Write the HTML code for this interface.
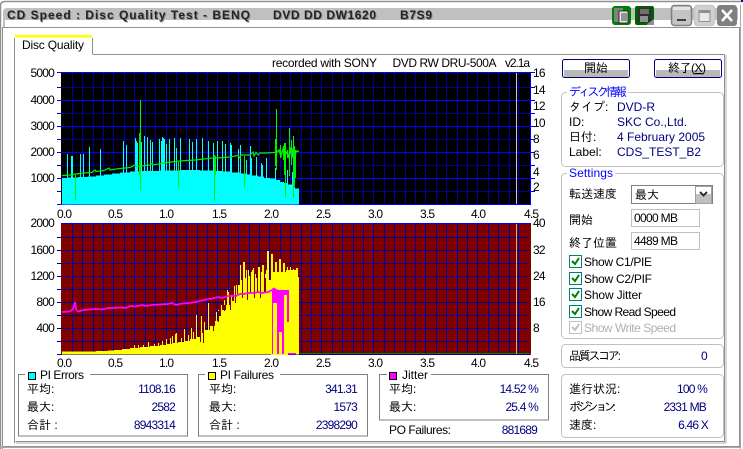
<!DOCTYPE html>
<html><head><meta charset="utf-8"><title>CD Speed</title>
<style>
html,body{margin:0;padding:0;background:#fff;overflow:hidden}
svg{display:block}
text{font-family:"Liberation Sans","IPAGothic","Noto Sans CJK JP",sans-serif;font-size:12px;fill:#000}
.n{letter-spacing:-.8px}
.r{text-anchor:end}
.v{fill:#000080}
.b{fill:#0000ff}
.g{fill:#b0b0b0}
.t{font-family:"Liberation Sans",sans-serif;font-size:12px;font-weight:bold;fill:#222}
.ts{font-family:"Liberation Sans",sans-serif;font-size:12px;font-weight:bold;fill:#909090}
.c{shape-rendering:crispEdges}
</style></head><body>
<svg width="743" height="449" viewBox="0 0 743 449" xmlns="http://www.w3.org/2000/svg">
<defs>
<path id="vl" d="M72.5 0V449M82.5 0V449M93.5 0V449M103.5 0V449M113.5 0V449M124.5 0V449M134.5 0V449M145.5 0V449M155.5 0V449M166.5 0V449M176.5 0V449M186.5 0V449M197.5 0V449M207.5 0V449M217.5 0V449M228.5 0V449M238.5 0V449M249.5 0V449M259.5 0V449M269.5 0V449M280.5 0V449M290.5 0V449M301.5 0V449M311.5 0V449M321.5 0V449M332.5 0V449M342.5 0V449M353.5 0V449M363.5 0V449M373.5 0V449M384.5 0V449M394.5 0V449M405.5 0V449M415.5 0V449M425.5 0V449M436.5 0V449M446.5 0V449M457.5 0V449M467.5 0V449M477.5 0V449M488.5 0V449M498.5 0V449M509.5 0V449M518.5 0V449"/>
<clipPath id="c1"><rect x="61" y="73" width="470" height="132"/></clipPath>
<clipPath id="c2"><rect x="61" y="224" width="470" height="131"/></clipPath>
</defs>

<!-- window frame -->
<rect width="743" height="449" fill="#fff"/>
<path d="M0.5 449V6Q0.5 1.5 5 1.5H741" fill="none" stroke="#909090" stroke-width="1.5"/>
<path d="M3 28V12Q3 8 7 8H738V20H5V28Z" fill="#c0c0c0"/>
<path class="c" d="M2.5 449V27.5H739.5V446.5H2.5" fill="none" stroke="#909090"/>
<path class="c" d="M740.5 5V449M0 447.5H741" fill="none" stroke="#a8a8a8"/>
<rect x="741" y="0" width="2" height="2" fill="#0000c0"/>

<!-- title -->
<text class="ts" x="8" y="20" textLength="243" lengthAdjust="spacing">CD Speed : Disc Quality Test - BENQ</text>
<text class="t" x="7" y="19" textLength="243" lengthAdjust="spacing">CD Speed : Disc Quality Test - BENQ</text>
<text class="ts" x="274" y="20" textLength="103" lengthAdjust="spacing">DVD DD DW1620</text>
<text class="t" x="273" y="19" textLength="103" lengthAdjust="spacing">DVD DD DW1620</text>
<text class="ts" x="401" y="20" textLength="32" lengthAdjust="spacing">B7S9</text>
<text class="t" x="400" y="19" textLength="32" lengthAdjust="spacing">B7S9</text>

<!-- title icons -->
<rect x="612" y="6" width="19" height="19" rx="3" fill="#008000"/>
<rect x="614" y="8" width="9" height="14" fill="#808080"/>
<rect x="619" y="11" width="9" height="12" fill="#e8e8e8" stroke="#303030"/>
<path class="c" d="M621 14H627M621 16H627M621 18H627M621 20H627" stroke="#404040"/>
<rect x="635" y="6" width="19" height="19" rx="2" fill="#006000"/>
<rect x="638" y="8" width="13" height="14" fill="#303030"/>
<rect x="640" y="9" width="9" height="5" fill="#707070"/>
<rect x="640" y="16" width="8" height="6" fill="#909090"/>
<path d="M647 24L654 19V25H647Z" fill="#909090"/>

<!-- window buttons -->
<rect x="671.5" y="5.5" width="20" height="20" rx="3" fill="#c4c4c4" stroke="#808080" stroke-width="1.5"/>
<rect x="673" y="7" width="17" height="3" fill="#e4e4e4"/>
<rect x="677" y="19" width="9" height="2" fill="#404040"/>
<rect x="694.5" y="5.5" width="20" height="20" rx="3" fill="#d0d0d0" stroke="#c8c8c8" stroke-width="1.5"/>
<rect x="699" y="10.5" width="11" height="11" fill="#e8e8e8" stroke="#909090"/>
<rect x="699" y="10" width="11" height="3" fill="#909090"/>
<rect x="717" y="5" width="20" height="21" rx="3" fill="#808080"/>
<path d="M722 10L732 21M732 10L722 21" stroke="#fff" stroke-width="2.5"/>

<!-- tab + panel -->
<path class="c" d="M92.5 54.5H724.5V441.5H15.5" fill="none" stroke="#909090"/>
<path class="c" d="M726 55V443H16" fill="none" stroke="#b0b0b0"/>
<path class="c" d="M14.5 443V38M92.5 38V54" fill="none" stroke="#909090"/>
<rect x="15" y="35" width="77" height="2.5" fill="#ffff00"/>
<text x="22" y="49" textLength="62" lengthAdjust="spacing">Disc Quality</text>

<text x="272" y="67" textLength="105" lengthAdjust="spacing">recorded with SONY</text>
<text x="392.500" y="67" textLength="104" lengthAdjust="spacing">DVD RW DRU-500A</text>
<text x="505" y="67" textLength="25" lengthAdjust="spacing">v2.1a</text>

<!-- chart 1 -->
<rect class="c" x="61" y="73" width="470" height="132" fill="#000"/>
<g clip-path="url(#c1)"><use href="#vl" stroke="#0000a0" stroke-width="1" class="c"/></g>
<path class="c" d="M61 87.5H531M61 113.5H531M61 139.5H531M61 165.5H531M61 191.5H531" stroke="#000090"/>
<path class="c" d="M57 72.500H531M57 100.500H531M57 126.500H531M57 152.500H531M57 178.500H531M57 204.500H531" stroke="#0000ff"/>
<path class="c" d="M57 87.500H61M57 113.500H61M57 139.500H61M57 165.500H61M57 191.500H61" stroke="#0000c0"/>
<path class="c" d="M530.500 72V205M531 72.500H535M531 87.500H535M531 100.500H535M531 113.500H535M531 126.500H535M531 139.500H535M531 152.500H535M531 165.500H535M531 178.500H535M531 191.500H535" stroke="#0000ff"/>
<rect class="c" x="516" y="73" width="1" height="131" fill="#c8c8c8"/>
<!-- cyan area -->
<path class="c" fill="#00ffff" d="M62 204.500V178H68V177.500H78V177H88V176.500H96V175.500H104V174.500H112V173.500H120V172.500H130V171.500H142V171H160V170.500H180V170H200V170.500H213V171H222V171.500H232V172.500H240V173.500H246V174.500H252V175.500H258V176.500H264V178H270V178.500H276V180H280V182H284V183H288V184.500H292V186.500H295V188.500H299V204.500Z"/>
<path class="c" fill="none" stroke="#00ffff" d="M67.500 178V154M71.500 178V156M72.500 178V156M80.500 178V154M83.500 178V154M89.500 178V147M100.500 178V149M123.500 178V141M126.500 178V145M135.500 178V138M136.500 178V141M137.500 178V143M141.500 178V142M144.500 178V136M147.500 178V137M150.500 178V140M152.500 178V142M159.500 178V139M161.500 178V141M162.500 178V137M163.500 178V138M164.500 178V139M166.500 178V144M169.500 178V139M174.500 178V138M176.500 178V148M180.500 178V138M189.500 178V139M192.500 178V142M196.500 178V139M202.500 178V138M208.500 178V141M213.500 178V143M217.500 178V141M222.500 178V141M225.500 178V144M230.500 178V143M231.500 178V145M238.500 178V149M240.500 178V145M246.500 178V160M250.500 178V146M251.500 178V158M256.500 178V157M261.500 178V163M262.500 178V165M266.500 178V158M275.500 180V168M287.500 184V170M292.500 187V172"/>
<!-- green -->
<polyline fill="none" stroke="#00f000" stroke-width="1.200" points="62,175.500 70,175 76,174 84,173 92,172.500 95,170 96,171.500 104,170.500 109,168 110,170 120,168.500 130,167.500 135,165 136,166.500 150,165 152,163.500 153,165 167,162.500 180,161 195,160 213,158 214,156 216,158 230,157 238,155.500 240,158 241,155 250,155 253,152 254,156 256,152.500 258,155 260,153 266,153 275,152.500"/>
<path fill="none" stroke="#00f000" stroke-width="1.200" class="c" d="M75.500 175V200.500M140.500 100V190.500M139.500 133V175M178.500 162V187.500M214.500 155V201M215.500 156V175M244.500 156V187.500M276.500 109V170M275.500 139V166M285.500 143V197M284.500 143V175M289.500 128V176M293.500 136V198M294.500 146V186M280.500 145V158M283.500 146V160M287.500 150V158M291.500 140V165M295.500 150V178"/>
<polyline fill="none" stroke="#00f000" stroke-width="1.500" points="276,153 279,150 281,156 283,149 285,155 287,152 289,158 290,147 292,158 293,148 295,157 296,151 299,151.500"/>

<!-- chart 1 labels -->
<text class="n r" x="54" y="77">5000</text>
<text class="n r" x="54" y="104">4000</text>
<text class="n r" x="54" y="130">3000</text>
<text class="n r" x="54" y="156">2000</text>
<text class="n r" x="54" y="182">1000</text>
<text class="n" x="533" y="77">16</text>
<text class="n" x="533" y="94">14</text>
<text class="n" x="533" y="110">12</text>
<text class="n" x="533" y="127">10</text>
<text class="n" x="533" y="143">8</text>
<text class="n" x="533" y="159">6</text>
<text class="n" x="533" y="176">4</text>
<text class="n" x="533" y="191">2</text>
<text class="n" x="57" y="218">0.0</text><text class="n" x="108" y="218">0.5</text><text class="n" x="159" y="218">1.0</text><text class="n" x="212" y="218">1.5</text><text class="n" x="264" y="218">2.0</text><text class="n" x="316" y="218">2.5</text><text class="n" x="368" y="218">3.0</text><text class="n" x="420" y="218">3.5</text><text class="n" x="471" y="218">4.0</text><text class="n" x="524" y="218">4.5</text>

<!-- chart 2 -->
<rect class="c" x="61" y="224" width="470" height="131" fill="#800000"/>
<g clip-path="url(#c2)"><use href="#vl" stroke="#0000a0" stroke-width="1" class="c"/></g>
<path class="c" d="M57 237.500H529M57 250.500H529M57 263.500H529M57 276.500H529M57 289.500H529M57 302.500H529M57 315.500H529M57 328.500H529M57 341.500H529M57 354.500H529" stroke="#000090"/>
<path class="c" d="M61 223.500H531" stroke="#0000ff"/>
<!-- yellow -->
<path class="c" fill="#ffff00" d="M62 354.500V351.500H96V351H108V350.500H114V350H122V349H130V348H140V347H150V346H160V345H166V344H172V343H178V342H184V341H190V339H196V337H200V333H205V330H210V326H215V321H218V316H222V310H226V305H230V301H234V297H237V294H245V293H255V292.500H268V292H270V272H286V270H298V277H299V354.500H296V354H288V355H271V354.500Z"/>
<path class="c" fill="none" stroke="#ffff00" d="M134.500 349V345M138.500 349V345M143.500 348V345M148.500 347V342M154.500 347V344M158.500 347V343M162.500 346V341M166.500 345V339M170.500 345V338M172.500 344V336M175.500 344V334M176.500 343V333M181.500 343V338M184.500 343V329M188.500 342V335M191.500 341V328M193.500 341V332M196.500 340V315M201.500 338V316M204.500 336V322M208.500 334V303M213.500 330V318M216.500 325V312M218.500 321V310M221.500 316V305M224.500 311V300M227.500 310V290M228.500 305V292M231.500 305V295M234.500 300V286M236.500 300V285M238.500 298V285M239.500 298V285M240.500 298V265M241.500 298V280M243.500 297V262M244.500 297V262M245.500 297V278M246.500 297V270M248.500 297V270M249.500 296V276M251.500 296V272M252.500 296V270M253.500 296V268M255.500 296V274M256.500 296V278M258.500 296V267M259.500 296V267M261.500 296V272M262.500 296V265M263.500 296V265M265.500 296V274M266.500 296V270M267.500 296V251M268.500 296V251M269.500 296V280M271.500 280V254M272.500 280V254M275.500 272V262M276.500 272V262M279.500 272V259M280.500 272V259M283.500 272V263M284.500 272V263M286.500 272V270M287.500 272V267M290.500 272V267M293.500 272V269M296.500 272V268M297.500 272V268"/>
<path class="c" fill="none" stroke="#800000" d="M200.500 328V342M203.500 330V343M213.500 318V331M218.500 311V322M224.500 305V311M230.500 295V310M235.500 292V303M242.500 285V298M247.500 285V300M254.500 280V298M260.500 285V298M265.500 278V292M270.500 258V280M274.500 258V270M278.500 262V272M282.500 266V272"/>
<!-- magenta -->
<polyline fill="none" stroke="#ff00ff" stroke-width="1.800" points="62,312 70,311.500 73,309 75,302 76,309 78,311.500 84,310 90,309.500 96,309 102,309.500 108,308 114,308 120,307.500 126,308 130,306 136,306.500 142,305 146,306 152,305 160,304.500 168,304 172,303 176,305 182,303.500 190,303 198,301.500 204,300 212,298.500 218,297 222,298 228,296 236,296 240,294 244,294 248,293 254,293 258,292 262,293 268,292 272,290 274,288.500 276,290 279,291"/>
<path class="c" fill="#ff00ff" d="M272 290H273V354H272ZM273 290H277V303H273ZM277 290H279V354H277ZM279 290H282V332H279ZM282 290H284V354H282ZM284 290H287V295H284ZM287 290H289V322H287ZM288 353H296V354.500H288Z"/>
<path class="c" d="M300 353.500H531" stroke="#008000" stroke-width="1" fill="none"/>
<path class="c" d="M529.500 224V354" stroke="#800000" fill="none"/>
<rect class="c" x="516" y="224" width="1" height="130" fill="#c0b0a0"/>

<!-- chart 2 labels -->
<text class="n r" x="54" y="227">2000</text>
<text class="n r" x="54" y="254">1600</text>
<text class="n r" x="54" y="280">1200</text>
<text class="n r" x="54" y="306">800</text>
<text class="n r" x="54" y="332">400</text>
<text class="n" x="533" y="227">40</text>
<text class="n" x="533" y="254">32</text>
<text class="n" x="533" y="280">24</text>
<text class="n" x="533" y="306">16</text>
<text class="n" x="533" y="332">8</text>
<text class="n" x="57" y="367">0.0</text><text class="n" x="108" y="367">0.5</text><text class="n" x="159" y="367">1.0</text><text class="n" x="212" y="367">1.5</text><text class="n" x="264" y="367">2.0</text><text class="n" x="316" y="367">2.5</text><text class="n" x="368" y="367">3.0</text><text class="n" x="420" y="367">3.5</text><text class="n" x="471" y="367">4.0</text><text class="n" x="524" y="367">4.5</text>

<!-- buttons -->
<rect x="562.500" y="59.500" width="67" height="18" rx="2" fill="#fff" stroke="#000080"/>
<rect x="564" y="70" width="64" height="7" fill="#b8b8b8"/>
<text x="584" y="72" textLength="24" lengthAdjust="spacing">開始</text>
<rect x="654.500" y="59.500" width="67" height="18" rx="2" fill="#fff" stroke="#000080"/>
<rect x="656" y="70" width="64" height="7" fill="#b8b8b8"/>
<text x="668" y="72" textLength="38" lengthAdjust="spacing">終了(<tspan text-decoration="underline">X</tspan>)</text>

<!-- disc info -->
<rect x="561.500" y="92.500" width="162" height="74" rx="4" fill="none" stroke="#c0c0c0"/>
<rect x="567" y="86" width="61" height="14" fill="#fff"/>
<text class="b" x="569" y="96" textLength="58" lengthAdjust="spacing">ディスク情報</text>
<text x="569" y="111">タイプ:</text><text class="v" x="617" y="111">DVD-R</text>
<text x="569" y="126">ID:</text><text class="v" x="617" y="126">SKC Co.,Ltd.</text>
<text x="569" y="141">日付:</text><text class="v" x="617" y="141">4 February 2005</text>
<text x="569" y="156">Label:</text><text class="v" x="617" y="156">CDS_TEST_B2</text>

<!-- settings -->
<rect x="561.500" y="173.500" width="162" height="165" rx="4" fill="none" stroke="#c0c0c0"/>
<rect x="567" y="167" width="48" height="14" fill="#fff"/>
<text class="b" x="569" y="177" textLength="44" lengthAdjust="spacing">Settings</text>
<text x="569" y="198">転送速度</text>
<rect class="c" x="631.500" y="185.500" width="81" height="18" fill="#fff" stroke="#808080"/>
<text x="635" y="199">最大</text>
<rect class="c" x="695.500" y="186.500" width="16" height="17" fill="#c0c0c0" stroke="#a0a0a0"/>
<rect x="696" y="187" width="15" height="7" fill="#fff"/>
<path d="M700 192L703.500 195.500L707 192" fill="none" stroke="#303030" stroke-width="2"/>
<text x="569" y="224">開始</text>
<rect class="c" x="631.500" y="209.500" width="68" height="17" fill="#fff" stroke="#c0c0c0"/>
<text x="634" y="222" textLength="44" lengthAdjust="spacing">0000 MB</text>
<text x="569" y="247">終了位置</text>
<rect class="c" x="631.500" y="232.500" width="68" height="17" fill="#fff" stroke="#c0c0c0"/>
<text x="634" y="245" textLength="44" lengthAdjust="spacing">4489 MB</text>

<g fill="#fff" stroke="#008080" class="c">
<rect x="569.500" y="255.500" width="12" height="12"/>
<rect x="569.500" y="272.500" width="12" height="12"/>
<rect x="569.500" y="288.500" width="12" height="12"/>
<rect x="569.500" y="305.500" width="12" height="12"/>
<rect x="569.500" y="321.500" width="12" height="12" stroke="#c0c0c0"/>
</g>
<g fill="none" stroke="#008000" stroke-width="2">
<path d="M572 261L575 264L579 258"/>
<path d="M572 278L575 281L579 275"/>
<path d="M572 294L575 297L579 291"/>
<path d="M572 311L575 314L579 308"/>
<path d="M572 327L575 330L579 324" stroke="#c0c0c0"/>
</g>
<text x="584" y="266" textLength="68" lengthAdjust="spacing">Show C1/PIE</text>
<text x="584" y="283" textLength="68" lengthAdjust="spacing">Show C2/PIF</text>
<text x="584" y="299" textLength="58" lengthAdjust="spacing">Show Jitter</text>
<text x="584" y="316" textLength="92" lengthAdjust="spacing">Show Read Speed</text>
<text class="g" x="584" y="332" textLength="92" lengthAdjust="spacing">Show Write Speed</text>

<!-- score -->
<rect x="561.500" y="344.500" width="162" height="23" rx="4" fill="none" stroke="#c0c0c0"/>
<text x="569" y="360" textLength="52" lengthAdjust="spacing">品質スコア:</text>
<text class="n v" x="701" y="360">0</text>

<!-- progress -->
<rect x="561.500" y="374.500" width="162" height="63" rx="4" fill="none" stroke="#c0c0c0"/>
<text x="569" y="393">進行状況:</text><text class="n v r" x="707" y="393">100 %</text>
<text x="569" y="411" textLength="47" lengthAdjust="spacing">ポジション:</text><text class="n v r" x="706" y="411">2331 MB</text>
<text x="569" y="429">速度:</text><text class="n v r" x="708" y="429">6.46 X</text>

<!-- PI Errors -->
<rect class="c" x="18.500" y="374.500" width="169" height="61.500" fill="none" stroke="#808080"/>
<rect x="25" y="368" width="65" height="12" fill="#fff"/>
<rect class="c" x="28.500" y="372.500" width="7" height="7" fill="#00ffff" stroke="#000"/>
<text x="40" y="379" textLength="44" lengthAdjust="spacing">PI Errors</text>
<text x="27" y="393">平均:</text><text class="n v r" x="175" y="393">1108.16</text>
<text x="27" y="411">最大:</text><text class="n v r" x="175" y="411">2582</text>
<text x="27" y="429">合計 :</text><text class="n v r" x="175" y="429">8943314</text>

<!-- PI Failures -->
<rect class="c" x="198.500" y="374.500" width="169" height="61.500" fill="none" stroke="#808080"/>
<rect x="205" y="368" width="75" height="12" fill="#fff"/>
<rect class="c" x="208.500" y="372.500" width="7" height="7" fill="#ffff00" stroke="#000"/>
<text x="220" y="379" textLength="54" lengthAdjust="spacing">PI Failures</text>
<text x="209" y="393">平均:</text><text class="n v r" x="357" y="393">341.31</text>
<text x="209" y="411">最大:</text><text class="n v r" x="357" y="411">1573</text>
<text x="209" y="429">合計 :</text><text class="n v r" x="357" y="429">2398290</text>

<!-- Jitter -->
<rect class="c" x="379.500" y="374.500" width="169" height="45.500" fill="none" stroke="#808080"/>
<rect x="387" y="368" width="44" height="12" fill="#fff"/>
<rect class="c" x="389.500" y="372.500" width="7" height="7" fill="#ff00ff" stroke="#000"/>
<text x="402" y="379" textLength="26" lengthAdjust="spacing">Jitter</text>
<text x="389" y="393">平均:</text><text class="n v r" x="538" y="393">14.52 %</text>
<text x="389" y="411">最大:</text><text class="n v r" x="538" y="411">25.4 %</text>
<text x="389" y="434" textLength="62" lengthAdjust="spacing">PO Failures:</text><text class="n v r" x="537" y="434">881689</text>
</svg>
</body></html>
